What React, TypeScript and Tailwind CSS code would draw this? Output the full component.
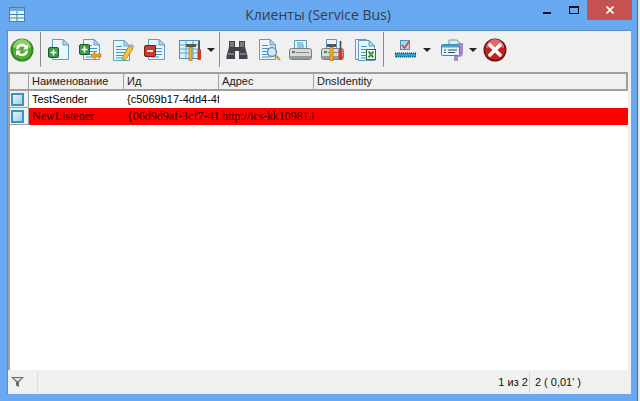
import type { ReactNode } from 'react';

function Ico({ w = 24, h = 24, children }: { w?: number; h?: number; children: ReactNode }) {
  return (
    <svg width={w} height={h} viewBox={`0 0 ${w} ${h}`} className="block shrink-0">
      {children}
    </svg>
  );
}

// листок с загнутым углом
function Page({ x = 0, y = 0, lines = true }: { x?: number; y?: number; lines?: boolean }) {
  return (
    <g transform={`translate(${x} ${y})`}>
      <path d="M1.5 .5H12L17.5 6V20.5H1.5Z" fill="#eaf5fb" stroke="#5b9fc4" />
      <path d="M12 .5V6H17.5Z" fill="#bcdcec" stroke="#5b9fc4" />
      {lines && <path d="M4 6.5H10M4 9.5H15M4 12.5H15M4 15.5H15M4 18H12" stroke="#3f97c4" strokeWidth="1.2" />}
    </g>
  );
}

function GreenPlus({ x, y }: { x: number; y: number }) {
  return (
    <g transform={`translate(${x} ${y})`}>
      <rect x=".5" y=".5" width="10" height="10" rx="1.5" fill="#3f9a45" stroke="#1f5c26" />
      <path d="M5.5 2.5V8.5M2.5 5.5H8.5" stroke="#fff" strokeWidth="1.6" />
    </g>
  );
}

function Refresh() {
  return (
    <Ico>
      <circle cx="12" cy="12" r="11.5" fill="#2f8a1e" />
      <circle cx="12" cy="12" r="9.5" fill="#52ab35" />
      <path d="M3 10a9 9 0 0 1 18 0c-3-1.5-15-1.5-18 0z" fill="#8ccf6b" />
      <path d="M6 11a6 6 0 0 1 10.5-3.2L18 6.4V11.5H13l1.8-1.9A3.7 3.7 0 0 0 8.3 11.6Z" fill="#fff" />
      <path d="M18 13a6 6 0 0 1-10.5 3.2L6 17.6V12.5H11l-1.8 1.9a3.7 3.7 0 0 0 6.5-2Z" fill="#fff" />
    </Ico>
  );
}

function AddDoc() {
  return (
    <Ico w={22} h={22}>
      <Page x={3} y={0} lines={false} />
      <GreenPlus x={0} y={8} />
    </Ico>
  );
}

function AddArrowDoc() {
  return (
    <Ico w={23} h={22}>
      <Page x={3} y={0} />
      <GreenPlus x={0} y={5} />
      <path d="M12 16.5L16 13V15H22V18H16V20Z" fill="#f0a020" stroke="#b56a10" strokeWidth=".6" />
    </Ico>
  );
}

function EditDoc() {
  return (
    <Ico>
      <Page x={0} y={2} />
      <path d="M17 8L21 11L14 21L10.5 22L11 18Z" fill="#f5c238" stroke="#a97a18" strokeWidth=".7" />
      <path d="M17 8L19 5.5L22.5 8L21 11Z" fill="#b8b0a0" />
    </Ico>
  );
}

function DeleteDoc() {
  return (
    <Ico w={21} h={22}>
      <Page x={3} y={0} />
      <rect x=".5" y="6.5" width="11" height="11" rx="1.5" fill="#d0392c" stroke="#7a1a14" />
      <path d="M3 12H9" stroke="#fff" strokeWidth="1.8" />
    </Ico>
  );
}

function ToolsOnGrid() {
  return (
    <Ico w={23} h={23}>
      <rect x=".5" y="2.5" width="20" height="18" fill="#d8eef8" stroke="#4a93b8" />
      <path d="M1 7H20M1 11H20M1 15H20M7 3V20M14 3V20" stroke="#62aacb" />
      <path d="M7 6H17V9H7Z" fill="#555" />
      <rect x="10" y="9" width="3" height="14" fill="#f0b030" stroke="#8a5c10" strokeWidth=".5" />
      <rect x="18.5" y="11" width="3.5" height="11" rx="1" fill="#c93a2c" />
      <path d="M20 3V11" stroke="#444" strokeWidth="1.6" />
    </Ico>
  );
}

function Binoculars() {
  return (
    <Ico w={22} h={20}>
      <path d="M3 1H9V7H13V1H19V7L21.5 16V19H13V11H9V19H.5V16L3 7Z" fill="#43434d" />
      <path d="M4 2H8V7H4ZM14 2H18V7H14ZM2 13H8V15H2ZM14 13H20V15H14Z" fill="#7a7a86" />
    </Ico>
  );
}

function Preview() {
  return (
    <Ico w={23} h={22}>
      <Page x={0} y={0} />
      <circle cx="14" cy="13" r="4.5" fill="#cfe9f6" stroke="#6d8fa3" strokeWidth="1.4" />
      <path d="M17.5 16.5L22 21" stroke="#d49a28" strokeWidth="2.4" />
    </Ico>
  );
}

function PrinterBody({ y = 8 }: { y?: number }) {
  return (
    <g transform={`translate(0 ${y})`}>
      <rect x=".5" y=".5" width="22" height="11" rx="2" fill="#d8d8d8" stroke="#7d7d7d" />
      <rect x="1" y="8" width="21" height="3" fill="#9a9a9a" />
      <rect x="3" y="3" width="3" height="2" fill="#2f9a3a" />
      <path d="M7 4.5H20" stroke="#8a8a8a" />
    </g>
  );
}

function PrintIco() {
  return (
    <Ico w={23} h={20}>
      <path d="M5.5 .5H17.5V9H5.5Z" fill="#e6f4fb" stroke="#4f9cc4" />
      <path d="M8 3H14M8 5H15M8 7H15" stroke="#3f97c4" />
      <PrinterBody />
    </Ico>
  );
}

function PrintSettings() {
  return (
    <Ico w={23} h={22}>
      <path d="M5.5 .5H15.5V10H5.5Z" fill="#e6f4fb" stroke="#4f9cc4" />
      <PrinterBody y={9} />
      <path d="M6 5H15V8H6Z" fill="#555" />
      <rect x="9" y="8" width="3" height="14" fill="#f0b030" stroke="#8a5c10" strokeWidth=".5" />
      <rect x="17.5" y="10" width="4" height="11" rx="1" fill="#c93a2c" />
      <path d="M19.5 2V10" stroke="#444" strokeWidth="1.6" />
    </Ico>
  );
}

function ExcelDocs() {
  return (
    <Ico w={22} h={22}>
      <Page x={0} y={0} lines={false} />
      <Page x={3} y={1} />
      <rect x="12.5" y="10.5" width="9" height="10" fill="#fff" stroke="#2e6b2e" />
      <path d="M14.5 12.5L19.5 18.5M19.5 12.5L14.5 18.5" stroke="#3c9a3c" strokeWidth="2" />
    </Ico>
  );
}

function CheckLine() {
  return (
    <Ico w={21} h={20}>
      <rect x="5.5" y=".5" width="9" height="9" fill="#a9d4ea" stroke="#4a93b8" />
      <path d="M7 5L9.5 8L14 1.5" fill="none" stroke="#d64530" strokeWidth="1.6" />
      <rect x="0" y="13" width="21" height="4" fill="#16a6ea" stroke="#123" strokeDasharray="1 1" />
    </Ico>
  );
}

function PrintClip() {
  return (
    <Ico w={23} h={24}>
      <path d="M8 2H16L19 5V7H8Z" fill="#dcebf4" stroke="#5b9fc4" />
      <path d="M17 5H22V15C22 18 20 19 17 19V23H13V13H17Z" fill="#a988cc" />
      <rect x=".5" y="6.5" width="18" height="11" rx="1" fill="#e6f4fb" stroke="#3f86ac" />
      <rect x="1" y="7" width="17" height="2.5" fill="#4a9fc8" />
      <path d="M3 12H5M3 14.5H5M7 12H16M7 14.5H14" stroke="#27506b" />
    </Ico>
  );
}

function StopIco() {
  return (
    <Ico>
      <circle cx="12" cy="12" r="11.5" fill="#6c1512" />
      <circle cx="12" cy="12" r="10" fill="#c4211f" />
      <path d="M3 10a9 9 0 0 1 18 0c-3-1.5-15-1.5-18 0z" fill="#dd6b68" />
      <path d="M7 7L17 17M17 7L7 17" stroke="#fff" strokeWidth="3.6" strokeLinecap="round" />
    </Ico>
  );
}

function Caret({ className }: { className: string }) {
  return <div className={`h-0 w-0 border-x-[4px] border-t-[4px] border-x-transparent border-t-[#222] ${className}`} />;
}

function Sep({ className }: { className: string }) {
  return <div className={`h-[35px] w-px bg-[#8c8c8c] ${className}`} />;
}

function RowMark() {
  return (
    <div className="flex h-[17px] w-[19px] shrink-0 items-center justify-center border-r border-b border-[#a0a0a0] bg-[#f0f0f0] pr-[3px]">
      <div className="size-[13px] shrink-0 border-2 border-[#3a94bd] bg-linear-to-br from-[#e4f3fa] to-[#9fd0e8]" />
    </div>
  );
}

const columns = [
  { title: 'Наименование', width: 'w-[95px]' },
  { title: 'Ид', width: 'w-[95px]' },
  { title: 'Адрес', width: 'w-[95px]' },
  { title: 'DnsIdentity', width: 'flex-1' },
];

export default function App() {
  return (
    <div className="flex h-[401px] w-[640px] overflow-hidden bg-[#69a9f2] font-['Liberation_Sans',sans-serif]">
      <div className="flex min-w-0 flex-1 flex-col">
        <div className="grid h-[30px] shrink-0 grid-cols-[1fr_auto_1fr] items-start">
          <div className="pl-[9px] pt-[7px]">
            <svg width="16" height="16" viewBox="0 0 16 16" className="block">
              <rect x=".5" y=".5" width="15" height="14" fill="#e8f4fb" stroke="#3c86b5" />
              <rect x="1" y="1" width="14" height="3" fill="#6ab0d8" />
              <path d="M1 7.5H15M1 11H15M8 4V14" stroke="#3c86b5" />
            </svg>
          </div>
          <div className="mr-px pt-[5px] font-['Open_Sans',sans-serif] text-[14px] leading-[20px] text-[#333f4d]">
            Клиенты (Service Bus)
          </div>
          <div className="flex justify-end pr-[5px]">
            <div className="mt-[12px] mr-[18px] h-[2px] w-[8px] bg-[#111]" />
            <div className="mt-[6px] mr-[8px] h-[8px] w-[10px] border border-t-2 border-[#111]" />
            <div className="flex h-[20px] w-[45px] items-center justify-center bg-[#c75050]">
              <svg width="8" height="8" viewBox="0 0 8 8" className="block">
                <path d="M.5 .5L7.5 7.5M7.5 .5L.5 7.5" stroke="#fff" strokeWidth="1.6" />
              </svg>
            </div>
          </div>
        </div>

        <div className="mr-[6px] mb-[7px] ml-[7px] flex min-h-0 flex-1 flex-col border-t border-l border-[#5b8cc4] bg-[#f0f0f0]">
          <div className="flex h-[41px] shrink-0 items-center pb-[4px]">
            <div className="ml-[2px]"><Refresh /></div>
            <Sep className="ml-[6px]" />
            <div className="ml-[7px]"><AddDoc /></div>
            <div className="ml-[9px]"><AddArrowDoc /></div>
            <div className="ml-[10px]"><EditDoc /></div>
            <div className="ml-[8px]"><DeleteDoc /></div>
            <div className="ml-[14px]"><ToolsOnGrid /></div>
            <Caret className="ml-[5px]" />
            <Sep className="ml-[4px]" />
            <div className="ml-[6px]"><Binoculars /></div>
            <div className="ml-[10px]"><Preview /></div>
            <div className="ml-[8px]"><PrintIco /></div>
            <div className="ml-[9px]"><PrintSettings /></div>
            <div className="ml-[10px]"><ExcelDocs /></div>
            <Sep className="ml-[7px]" />
            <div className="ml-[11px]"><CheckLine /></div>
            <Caret className="ml-[7px]" />
            <div className="ml-[10px]"><PrintClip /></div>
            <Caret className="ml-[5px]" />
            <div className="ml-[6px]"><StopIco /></div>
          </div>

          <div className="mr-[3px] flex min-h-0 flex-1 flex-col border-t-2 border-l-2 border-[#a0a0a0] bg-white">
            <div className="flex h-[17px] shrink-0 border-r-2 border-b-2 border-[#a0a0a0] bg-[#f0f0f0] text-[11px] leading-[15px] text-[#222]">
              <div className="w-[19px] border-r border-[#a0a0a0]" />
              {columns.map((c) => (
                <div key={c.title} className={`${c.width} border-r border-[#a0a0a0] pl-[3px] last:border-r-0`}>
                  {c.title}
                </div>
              ))}
            </div>

            <div className="flex h-[17px] text-[11px] leading-[17px] text-black">
              <RowMark />
              <div className="w-[95px] pl-[3px]">TestSender</div>
              <div className="w-[95px] overflow-hidden pl-[3px] whitespace-nowrap">{'{c5069b17-4dd4-4f'}</div>
            </div>
            <div className="flex h-[17px] font-['Liberation_Serif',serif] text-[12px] leading-[17px] text-[#3a0000]">
              <RowMark />
              <div className="flex flex-1 bg-[#ff0000]">
                <div className="w-[95px] pl-[3px]">NewListener</div>
                <div className="w-[95px] overflow-hidden pl-[3px] whitespace-nowrap">{'{06d9d9af-3cf7-41'}</div>
                <div className="w-[95px] overflow-hidden pl-[3px] tracking-[-0.1px] whitespace-nowrap">http://ics-kk10981.i</div>
              </div>
            </div>
          </div>

          <div className="flex h-[24px] shrink-0 items-center text-[11px] leading-none text-[#111]">
            <div className="ml-[3px] flex h-[21px] w-[26px] items-center">
              <svg width="13" height="10" viewBox="0 0 13 10" className="block">
                <path d="M0 0H13L8 5V10L5 8.5V5Z" fill="#6a6a6a" />
                <path d="M2.5 1H10.5L6.5 4.5Z" fill="#e2e2e2" />
              </svg>
            </div>
            <div className="h-[21px] w-px bg-[#dcdcdc]" />
            <div className="flex-1" />
            <div>1 из 2</div>
            <div className="mx-px h-[21px] w-px bg-[#d4d4d4]" />
            <div className="ml-[4px] mr-[50px]">2 ( 0,01' )</div>
          </div>
        </div>
      </div>
      <div className="w-[3px] shrink-0 border-l border-[#3f6f9f] bg-[#e4ecdc]" />
    </div>
  );
}
